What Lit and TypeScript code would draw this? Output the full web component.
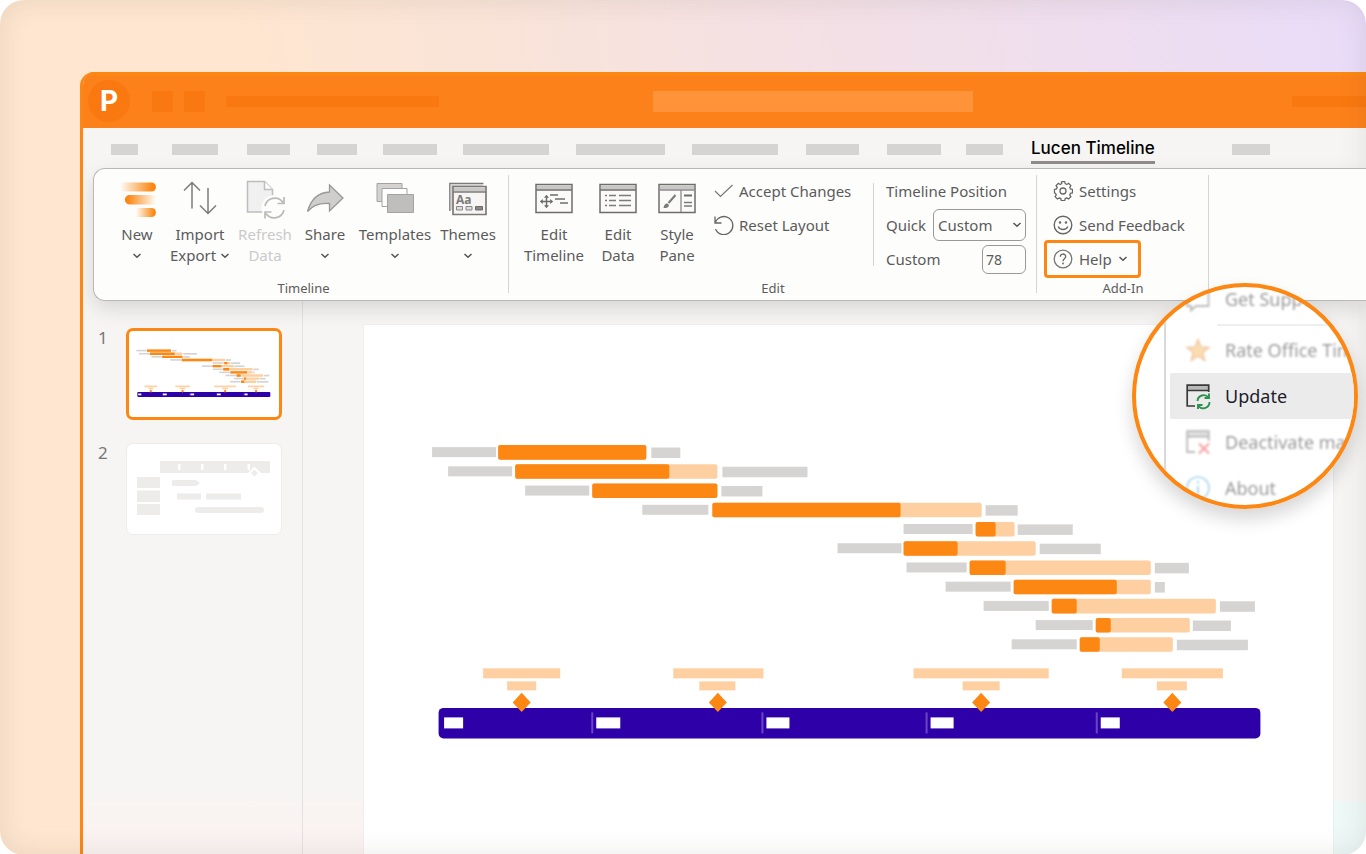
import { LitElement, html, css, svg } from "lit";
import { customElement, state } from "lit/decorators.js";

/** Placeholder ribbon tabs: [column width, bar width]. */
const TABS: [number, number][] = [
  [61, 27], [75, 46], [70, 43], [66, 40], [80, 54], [113, 86],
  [116, 89], [114, 86], [81, 53], [79, 54], [65, 37],
];

/** One task per row: label start/end, bar start, progress end, bar end, note start/end. */
const TASKS: number[][] = [
  [432, 496, 498, 646, 646, 651, 680],
  [448, 512, 515, 669, 717, 722, 807],
  [525, 589, 592, 717, 717, 721, 762],
  [642, 708, 712, 900, 981, 985, 1017],
  [903, 972, 975, 995, 1014, 1017, 1072],
  [837, 901, 903, 957, 1035, 1039, 1100],
  [906, 966, 969, 1005, 1150, 1154, 1188],
  [945, 1010, 1013, 1116, 1150, 1154, 1164],
  [983, 1048, 1051, 1076, 1215, 1219, 1254],
  [1035, 1092, 1095, 1110, 1189, 1192, 1230],
  [1011, 1076, 1079, 1099, 1172, 1176, 1247],
];

/** Milestones: centre, title start/width, date start/width. */
const MILESTONES = [
  [521.5, 483, 77, 507, 29],
  [717.5, 673, 90, 699, 36],
  [980.5, 913, 135, 962, 37],
  [1171.5, 1121, 101, 1156, 30],
];

/** Timeband ticks: label start, label width. */
const BAND = [[444, 19], [596, 24], [766, 23], [930, 23], [1100, 19]];

const gantt = (viewBox: string, label: string) => html`
  <svg class="gantt" viewBox=${viewBox} role="img" aria-label=${label}>
    ${TASKS.map((t, i) => {
      const y = 445 + i * 19.2;
      return svg`
        <rect x=${t[0]} y=${y + 2} width=${t[1] - t[0]} height="10" fill="#d5d4d2"/>
        <rect x=${t[2]} y=${y} width=${t[4] - t[2]} height="14.5" rx="2" fill="#fecfa0"/>
        <rect x=${t[2]} y=${y} width=${t[3] - t[2]} height="14.5" rx="2" fill="#fc8712"/>
        <rect x=${t[5]} y=${y + 2.4} width=${t[6] - t[5]} height="10.5" fill="#d5d4d2"/>`;
    })}
    <rect x="438.5" y="707.5" width="821" height="30.5" rx="5" fill="#2e00a8"/>
    ${BAND.map(([x, w], i) => svg`
      ${i ? svg`<rect x=${x - 5} y="712" width="2" height="21" fill="#6a44c4"/>` : ""}
      <rect x=${x} y="717" width=${w} height="11" fill="#fff"/>`)}
    ${MILESTONES.map(([c, tx, tw, dx, dw]) => svg`
      <rect x=${tx} y="668" width=${tw} height="10" fill="#fecfa0"/>
      <rect x=${dx} y="681" width=${dw} height="9" fill="#fecfa0"/>
      <path d="M${c} 692.3l9 9.7-9 9.7-9-9.7z" fill="#fc8712"/>`)}
  </svg>`;

const chevron = html`<svg class="chev" viewBox="0 0 10 6" aria-hidden="true"><path d="M1.500 1l3.500 3.300L8.500 1" fill="none" stroke="#555" stroke-width="1.500"/></svg>`;

const icon = (w: number, h: number, body: unknown) =>
  html`<svg width=${w} height=${h} viewBox="0 0 ${w} ${h}" fill="none" aria-hidden="true">${body}</svg>`;

const ICONS = {
  add: icon(38, 38, svg`
    <defs>
      <linearGradient id="a"><stop offset="0" stop-color="#fc8712" stop-opacity="0"/><stop offset=".9" stop-color="#fc8712"/></linearGradient>
      <linearGradient id="b"><stop offset=".1" stop-color="#fc8712"/><stop offset="1" stop-color="#fc8712" stop-opacity="0"/></linearGradient>
    </defs>
    <path d="M2 2.500h31.500a4.500 4.500 0 010 9H2z" fill="url(#a)"/>
    <path d="M38 15H11.500a4.700 4.700 0 000 9.400H38z" fill="url(#b)"/>
    <path d="M18 28h15.500a4.500 4.500 0 010 9H18z" fill="url(#a)"/>`),
  transfer: icon(34, 38, svg`<path d="M9 28.500V3M1 10.500l8-8 8 8M25 8v25M17 25.500l8 8 8-8" stroke="#7b7b7b" stroke-width="1.500"/>`),
  refresh: icon(40, 40, svg`
    <path d="M2.500 1.500h17l8 8V32h-25z" fill="#f0f0f0" stroke="#bdbdbd" stroke-width="1.500"/>
    <path d="M19.500 1.500v8h8" fill="#fff" stroke="#bdbdbd" stroke-width="1.500"/>
    <circle cx="29.500" cy="28" r="13" fill="#fdfdfb"/>
    <path d="M20 26a10 10 0 0118-3.500M39 30a10 10 0 01-18 3.500M39 17v6.500h-6.500M20 38.500V32h6.500" stroke="#bababa" stroke-width="1.700"/>`),
  share: icon(38, 38, svg`<path d="M1.500 31.500C5 19 12 12.500 23.500 12V5L37 18 23.500 31v-7.500C14 22.500 7 25 1.500 31.500z" fill="#cfcecd" stroke="#989898" stroke-width="1.300"/>`),
  templates: icon(38, 38, svg`
    <path d="M1 3.500h25v18H1z" fill="#d4d3d2" stroke="#a3a3a3"/>
    <path d="M6 8.500h25v18H6z" fill="#fff" stroke="#a3a3a3"/>
    <path d="M11.500 14.500h26v18h-26z" fill="#bfbebd" stroke="#a3a3a3"/>`),
  themes: icon(38, 38, svg`
    <path d="M.9 31V3.500h33.600" stroke="#7c7a79" stroke-width="1.500"/>
    <path d="M1.600 4.300h32v3h-30V30h-2z" fill="#d4d3d2"/>
    <path d="M4 6.500h33v28H4z" fill="#f6f5f4" stroke="#7c7a79" stroke-width="1.700"/>
    <path d="M5 7.500h31v4H5z" fill="#c9c8c7"/><path d="M4 12h33" stroke="#7c7a79" stroke-width="1.300"/>
    <text class="aa" x="7" y="24">Aa</text>
    <path d="M7.500 26.500h6v3.500h-6zM17 26.500h6v3.500h-6z" fill="#ddd" stroke="#8a8887"/>
    <path d="M26.500 26.500h7v3.500h-7z" fill="#8a8887" stroke="#6f6d6c"/>`),
  editTimeline: icon(38, 38, svg`
    <path d="M1 4.500h36v28H1z" fill="#fbfaf9" stroke="#6d6d6d" stroke-width="1.500"/>
    <path d="M2 5.500h34v4H2z" fill="#c8c7c6"/><path d="M1 10h36" stroke="#6d6d6d" stroke-width="1.300"/>
    <path d="M11.500 16.500v10M6.500 21.500h10M15 15h8M20 19h10M25 23h8" stroke="#6d6d6d" stroke-width="1.500"/>
    <path d="M11.500 14.800l2.500 3H9zM11.500 28.200l2.500-3H9zM4.800 21.500l3-2.500v5zM18.200 21.500l-3-2.500v5z" fill="#6d6d6d"/>`),
  editData: icon(38, 38, svg`
    <path d="M1 4.500h36v28H1z" fill="#fbfaf9" stroke="#6d6d6d" stroke-width="1.500"/>
    <path d="M2 5.500h34v4H2z" fill="#c8c7c6"/><path d="M1 10h36" stroke="#6d6d6d" stroke-width="1.300"/>
    <path d="M6 15.500h2m2 0h7m3 0h12M6 20.500h2m2 0h7m3 0h12M6 25.500h2m2 0h7m3 0h12" stroke="#7b7b7b" stroke-width="1.500"/>`),
  stylePane: icon(38, 38, svg`
    <path d="M1 4.500h36v28H1z" fill="#fbfaf9" stroke="#6d6d6d" stroke-width="1.500"/>
    <path d="M2 5.500h34v4H2z" fill="#c8c7c6"/><path d="M1 10h36M23 10v22" stroke="#8a8a8a" stroke-width="1.300"/>
    <path d="M17.500 15l-7 8" stroke="#7b7b7b" stroke-width="2"/><path d="M5.500 28c.5-2 1-4.500 3.500-4.500 2.500.5 2.500 3.500 0 4.200-1 .4-2 .3-3.500.3z" fill="#7b7b7b"/>
    <path d="M26 15.500h8" stroke="#6d6d6d" stroke-width="2"/><path d="M26 22.500h8M26 26h8" stroke="#7b7b7b" stroke-width="1.300"/>`),
  check: icon(20, 20, svg`<path d="M1 10l5.500 5.500L18.500 4" stroke="#777" stroke-width="1.200"/>`),
  reset: icon(20, 20, svg`<path d="M1 1.500v6.500h6.500M1.200 8A9 9 0 111.500 14" stroke="#666" stroke-width="1.300"/>`),
  gear: icon(20, 20, svg`
    <path d="M8.200 1l.5 2.200a7 7 0 00-1.700.7L5.100 2.700 2.700 5.100l1.200 1.900a7 7 0 00-.7 1.700L1 9.200v2.600M8.200 1h3.600l.5 2.200q.9.200 1.700.7l1.900-1.200 2.400 2.400-1.200 1.900q.5.800.7 1.700l2.200.5v3.600l-2.200.5q-.2.900-.7 1.700l1.200 1.900-2.400 2.400-1.900-1.200q-.8.500-1.700.7l-.5 2.200H8.200l-.5-2.200q-.9-.2-1.700-.7l-1.900 1.200-2.400-2.400 1.200-1.900q-.5-.8-.7-1.700L1 12.800V9.200" stroke="#666" stroke-width="1.300" transform="translate(.5 -.3) scale(.95)"/>
    <circle cx="10" cy="10" r="3" stroke="#666" stroke-width="1.300"/>`),
  smile: icon(20, 20, svg`
    <circle cx="10" cy="10" r="8.800" stroke="#666" stroke-width="1.400"/>
    <circle cx="7" cy="7.500" r="1.200" fill="#666"/><circle cx="13" cy="7.500" r="1.200" fill="#666"/>
    <path d="M5.200 11.500c1.600 4 8 4 9.600 0" stroke="#666" stroke-width="1.300"/>`),
  question: icon(20, 20, svg`
    <circle cx="10" cy="10" r="8.800" stroke="#777" stroke-width="1.300"/>
    <path d="M7.300 7.800c0-3.700 5.400-3.600 5.400-.3 0 2.200-2.700 2.200-2.700 4.800" stroke="#666" stroke-width="1.300"/>
    <circle cx="10" cy="14.500" r=".9" fill="#666"/>`),
  bubble: icon(24, 24, svg`<path d="M1 3h21.500v16H10l-5 4.500V19H1z" stroke="#777" stroke-width="1.800"/>`),
  star: icon(24, 24, svg`<path d="M12 1.500l3 7.500 8 .5-6.200 5 2 8L12 18l-6.800 4.500 2-8L1 9.500 9 9z" fill="#f6bd62" stroke="#e08c45" stroke-width="1.300"/>`),
  update: icon(24, 24, svg`
    <path d="M1.200 1.500h21.500V7H1.200z" fill="#b9b9b9"/>
    <path d="M9 22H1.200V1.200h21.500V8M1.200 6.500h21.500" stroke="#3a3a3a" stroke-width="1.700"/>
    <path d="M11.500 17a6.200 6.200 0 0111-3.500M23.500 18a6.200 6.200 0 01-11 4M23 9.500v4.500h-4.500M12 25v-4h4.500" stroke="#2f9151" stroke-width="1.900"/>`),
  deactivate: icon(24, 24, svg`
    <path d="M1.200 1.500h21.500V7H1.200z" fill="#ccc"/>
    <path d="M9 22H1.200V1.200h21.500V11M1.200 6.500h21.500" stroke="#777" stroke-width="1.900"/>
    <path d="M13 13.500l10 10M23 13.500l-10 10" stroke="#f0484c" stroke-width="2.200"/>`),
  about: icon(24, 24, svg`
    <circle cx="12" cy="12" r="11" stroke="#5fb3dc" stroke-width="1.700"/>
    <path d="M12 5v2.500M12 10v8.500" stroke="#5fb3dc" stroke-width="2"/>`),
};

@customElement("app-root")
export class AppRoot extends LitElement {
  @state() private position = "78";

  static styles = css`
    :host { display: block; font: 15px/21px "Noto Sans", "Open Sans", sans-serif; color: #5b5b5b; }
    * { box-sizing: border-box; }
    svg { display: block; flex: none; }
    button, select, input { font: inherit; color: inherit; margin: 0; padding: 0; border: 0; background: none; }
    .stage {
      position: relative; min-height: 100vh; padding: 72px 0 0 80px; display: flex; overflow: hidden; border-radius: 24px;
      background: linear-gradient(80deg, #fee6d0 0 25%, #fae4d7 40%, #f5e1e2 58%, #efdeee 80%, #e9dcf9 100%);
    }
    .stage::after { content: ""; position: absolute; inset: 0; border-radius: inherit; pointer-events: none; box-shadow: inset 0 0 28px rgba(60, 50, 40, .1); }
    .window { flex: 1; min-width: 0; display: flex; flex-direction: column; border-left: 3px solid #fc8712; border-radius: 14px 0 0 0; overflow: hidden; background: #f6f5f4; }
    .titlebar { height: 56px; display: flex; align-items: center; padding: 0 0 0 5px; border-top: 4px solid #fc8712; background: #fd811b; }
    .titlebar > * { margin-bottom: 2px; }
    .logo { width: 42px; height: 42px; border-radius: 50%; background: #f97810; color: #fff; font: 700 28px/42px Inter, sans-serif; text-align: center; }
    .sq { width: 21px; height: 21px; margin-left: 11px; background: #f97810; }
    .sq.first { margin-left: 22px; }
    .doc { width: 213px; height: 11px; margin-left: 21px; background: #f97810; }
    .search { width: 320px; height: 21px; margin-left: 214px; background: #ff9339; }
    .account { width: 74px; height: 11px; margin-left: auto; background: #f97810; }
    .tabs { height: 40px; display: grid; grid-template-rows: 100%; align-items: center; padding: 2px 0 0 28px; }
    .tab { height: 11px; background: #d5d4d2; }
    .tab.last { width: 38px; }
    .tab-active { justify-self: start; align-self: start; color: #000; padding-top: 6px; height: 34px; font: 500 17px/25px Inter, sans-serif; border-bottom: 3px solid #8f8c8a; white-space: nowrap; }
    .ribbon { position: relative; z-index: 1; display: flex; height: 133px; margin-left: 10px; border: 1px solid #b9b8b7; border-right: 0; border-radius: 12px 0 0 12px; background: #fdfdfb; box-shadow: 0 8px 20px rgba(0, 0, 0, .12); }
    .group { position: relative; display: flex; flex-direction: column; justify-content: space-between; padding: 4px 0 2px; }
    .group::after { content: ""; position: absolute; right: 0; top: 6px; bottom: 7px; width: 1px; background: #d6d5d4; }
    .caption { text-align: center; font-size: 13px; line-height: 20px; }
    .g1 { width: 415px; padding-left: 13px; }
    .g1 .caption { margin-right: 9px; }
    .g2 { width: 528px; }
    .g3 { width: 172px; }
    .body { display: flex; height: 105px; }
    .tools { display: grid; padding-top: 7px; align-items: start; }
    .g1 .tools { grid-template-columns: 60px 66px 64px 56px 84px 62px; }
    .g2 .tools { grid-template-columns: 70px 58px 60px; padding-left: 10px; width: 205px; }
    .tool { display: flex; flex-direction: column; align-items: center; text-align: center; white-space: nowrap; }
    .tool .pic { height: 44px; }
    .tool.off { color: #cacaca; }
    .chev { width: 10px; height: 6px; flex: none; }
    .line { height: 21px; display: flex; align-items: center; justify-content: center; gap: 4px; }
    .list { display: grid; grid-auto-rows: 34px; padding-top: 1px; align-items: center; justify-items: start; align-content: start; white-space: nowrap; }
    .actions { width: 159px; }
    .row { display: flex; align-items: center; gap: 5px; }
    .position { padding-left: 13px; width: 153px; position: relative; }
    .position::before { content: ""; position: absolute; left: 0; top: 10px; bottom: 12px; width: 1px; background: #d6d5d4; }
    .field { display: flex; align-items: center; justify-content: space-between; width: 140px; }
    .pick { display: grid; align-items: center; width: 93px; }
    .pick > * { grid-area: 1 / 1; }
    .pick .chev { justify-self: end; margin-right: 4px; pointer-events: none; }
    select { appearance: none; width: 93px; height: 32px; border: 1px solid #999; border-radius: 6px; padding: 0 0 0 4px; }
    .num { width: 44px; height: 29px; border: 1px solid #999; border-radius: 6px; padding: 0 0 0 3px; font-size: 14px; }
    .addin { padding-left: 16px; }
    .addin .row { gap: 6px; }
    .addin .help { height: 38px; margin-left: -9px; padding: 0 10px 0 6px; border: 3px solid #fc8712; border-radius: 4px; }
    .work { flex: 1; display: grid; grid-template-columns: 220px 1fr;
      background: linear-gradient(to top, rgba(252, 240, 238, .6), rgba(252, 243, 240, .6) 54px, transparent 54px); }
    .thumbs { display: grid; grid-template-columns: 28px 156px; align-content: start; gap: 23px 0; padding: 27px 0 0 15px; border-right: 1px solid #e3e2e1; }
    .n { font-size: 17px; line-height: 20px; color: #777; }
    .thumb { height: 92px; border-radius: 7px; background: #fff; overflow: hidden; border: 1px solid #ecebea; padding: 0; }
    .thumb.on { border: 3px solid #fc8712; }
    .thumb svg { width: 100%; height: 100%; }
    .canvas { padding: 24px 33px 0 61px; display: flex; background: linear-gradient(to top, #eef8f6 54px, transparent 54px) right / 33px 100% no-repeat; }
    .slide { flex: 1; background: #fff; box-shadow: 0 0 1px #ccc; overflow: hidden; }
    .gantt { width: 100%; }
    .lens { position: absolute; z-index: 2; top: 283px; right: 8px; width: 226px; height: 226px; border: 4px solid #fc8712; border-radius: 50%; background: #fff; overflow: hidden; }
    .glow { position: absolute; z-index: 1; top: 283px; right: 8px; width: 226px; height: 226px; border-radius: 50%; box-shadow: 0 10px 18px rgba(0, 0, 0, .16); }
    .menu { margin: -11px 0 0 28px; padding-left: 4px; border-left: 2px solid #d9d9d9; width: 240px; }
    .item { display: flex; align-items: center; gap: 15px; width: 100%; height: 46px; padding-left: 16px; font-size: 18px; line-height: 24px; white-space: nowrap; color: #333; }
    .item.dim > * { opacity: .5; filter: blur(1px); }
    .item.on { background: #ebebeb; border-radius: 2px; color: #1d1d2b; }
    .item svg { overflow: visible; }
    .sep { height: 2px; margin: 2px 0 1px 47px; background: #eee; }
    .aa { font: 700 12px "Open Sans", sans-serif; fill: #7c7a79; }
  `;

  private tool(pic: unknown, first: string, second: unknown, off = false) {
    return html`<button class="tool ${off ? "off" : ""}" ?disabled=${off}>
      <span class="pic">${pic}</span><span class="line">${first}</span><span class="line">${second}</span>
    </button>`;
  }

  render() {
    const columns = [...TABS.map((t) => t[0]), 201, 40].map((w) => `${w}px`).join(" ");
    return html`
      <div class="stage">
        <div class="window">
          <header class="titlebar">
            <span class="logo">P</span>
            <span class="sq first"></span><span class="sq"></span>
            <span class="doc"></span><span class="search"></span><span class="account"></span>
          </header>
          <nav class="tabs" style="grid-template-columns:${columns}">
            ${TABS.map(([, w]) => html`<span class="tab" style="width:${w}px"></span>`)}
            <button class="tab-active">Lucen Timeline</button>
            <span class="tab last"></span>
          </nav>
          <section class="ribbon">
            <div class="group g1">
              <div class="tools">
                ${this.tool(ICONS.add, "New", chevron)}
                ${this.tool(ICONS.transfer, "Import", html`Export ${chevron}`)}
                ${this.tool(ICONS.refresh, "Refresh", "Data", true)}
                ${this.tool(ICONS.share, "Share", chevron)}
                ${this.tool(ICONS.templates, "Templates", chevron)}
                ${this.tool(ICONS.themes, "Themes", chevron)}
              </div>
              <div class="caption">Timeline</div>
            </div>
            <div class="group g2">
              <div class="body">
                <div class="tools">
                  ${this.tool(ICONS.editTimeline, "Edit", "Timeline")}
                  ${this.tool(ICONS.editData, "Edit", "Data")}
                  ${this.tool(ICONS.stylePane, "Style", "Pane")}
                </div>
                <div class="list actions">
                  <button class="row">${ICONS.check}Accept Changes</button>
                  <button class="row">${ICONS.reset}Reset Layout</button>
                </div>
                <div class="list position">
                  <span>Timeline Position</span>
                  <div class="field">
                    <label for="quick">Quick</label>
                    <span class="pick"><select id="quick"><option>Custom</option></select>${chevron}</span>
                  </div>
                  <div class="field">
                    <label for="custom">Custom</label>
                    <input class="num" id="custom" .value=${this.position}
                      @input=${(e: Event) => (this.position = (e.target as HTMLInputElement).value)} />
                  </div>
                </div>
              </div>
              <div class="caption">Edit</div>
            </div>
            <div class="group g3">
              <div class="list addin">
                <button class="row">${ICONS.gear}Settings</button>
                <button class="row">${ICONS.smile}Send Feedback</button>
                <button class="row help">${ICONS.question}Help ${chevron}</button>
              </div>
              <div class="caption">Add-In</div>
            </div>
          </section>
          <main class="work">
            <aside class="thumbs">
              <span class="n">1</span>
              <button class="thumb on" aria-label="Slide 1">${gantt("387 331 926 531", "Timeline slide preview")}</button>
              <span class="n">2</span>
              <button class="thumb" aria-label="Slide 2">
                <svg viewBox="0 0 154 90" fill="#edeceb" aria-hidden="true">
                  <path d="M33 17h110v12H33zM10 33h23v11H10zM10 46.500h23v11.500H10zM10 60h23v11H10z"/>
                  <path d="M45 36h24l4 3-4 3H45zM50 49.500h24v6H50zM79 49.500h35v6H79z"/>
                  <rect x="68" y="63" width="69" height="6" rx="3"/>
                  <path d="M51 20h2.500v6H51zM74 20h2.500v6H74zM97 20h2.500v6H97zM120.500 20h2.500v6h-2.500zM127.500 22.500l6.500 6.500h-13z" fill="#fff"/>
                  <path d="M127.500 25.500l3.500 3.500-3.500 3.500-3.500-3.500z"/>
                </svg>
              </button>
            </aside>
            <div class="canvas">
              <div class="slide">${gantt("364 325 968 529", "Project timeline with tasks and milestones")}</div>
            </div>
          </main>
        </div>
        <div class="glow"></div>
        <div class="lens">
          <div class="menu" role="menu">
            <button class="item dim" role="menuitem">${ICONS.bubble}<span>Get Support</span></button>
            <div class="sep"></div>
            <button class="item dim" role="menuitem">${ICONS.star}<span>Rate Office Timeline</span></button>
            <button class="item on" role="menuitem">${ICONS.update}<span>Update</span></button>
            <button class="item dim" role="menuitem">${ICONS.deactivate}<span>Deactivate machine</span></button>
            <button class="item dim" role="menuitem">${ICONS.about}<span>About</span></button>
          </div>
        </div>
      </div>`;
  }
}
